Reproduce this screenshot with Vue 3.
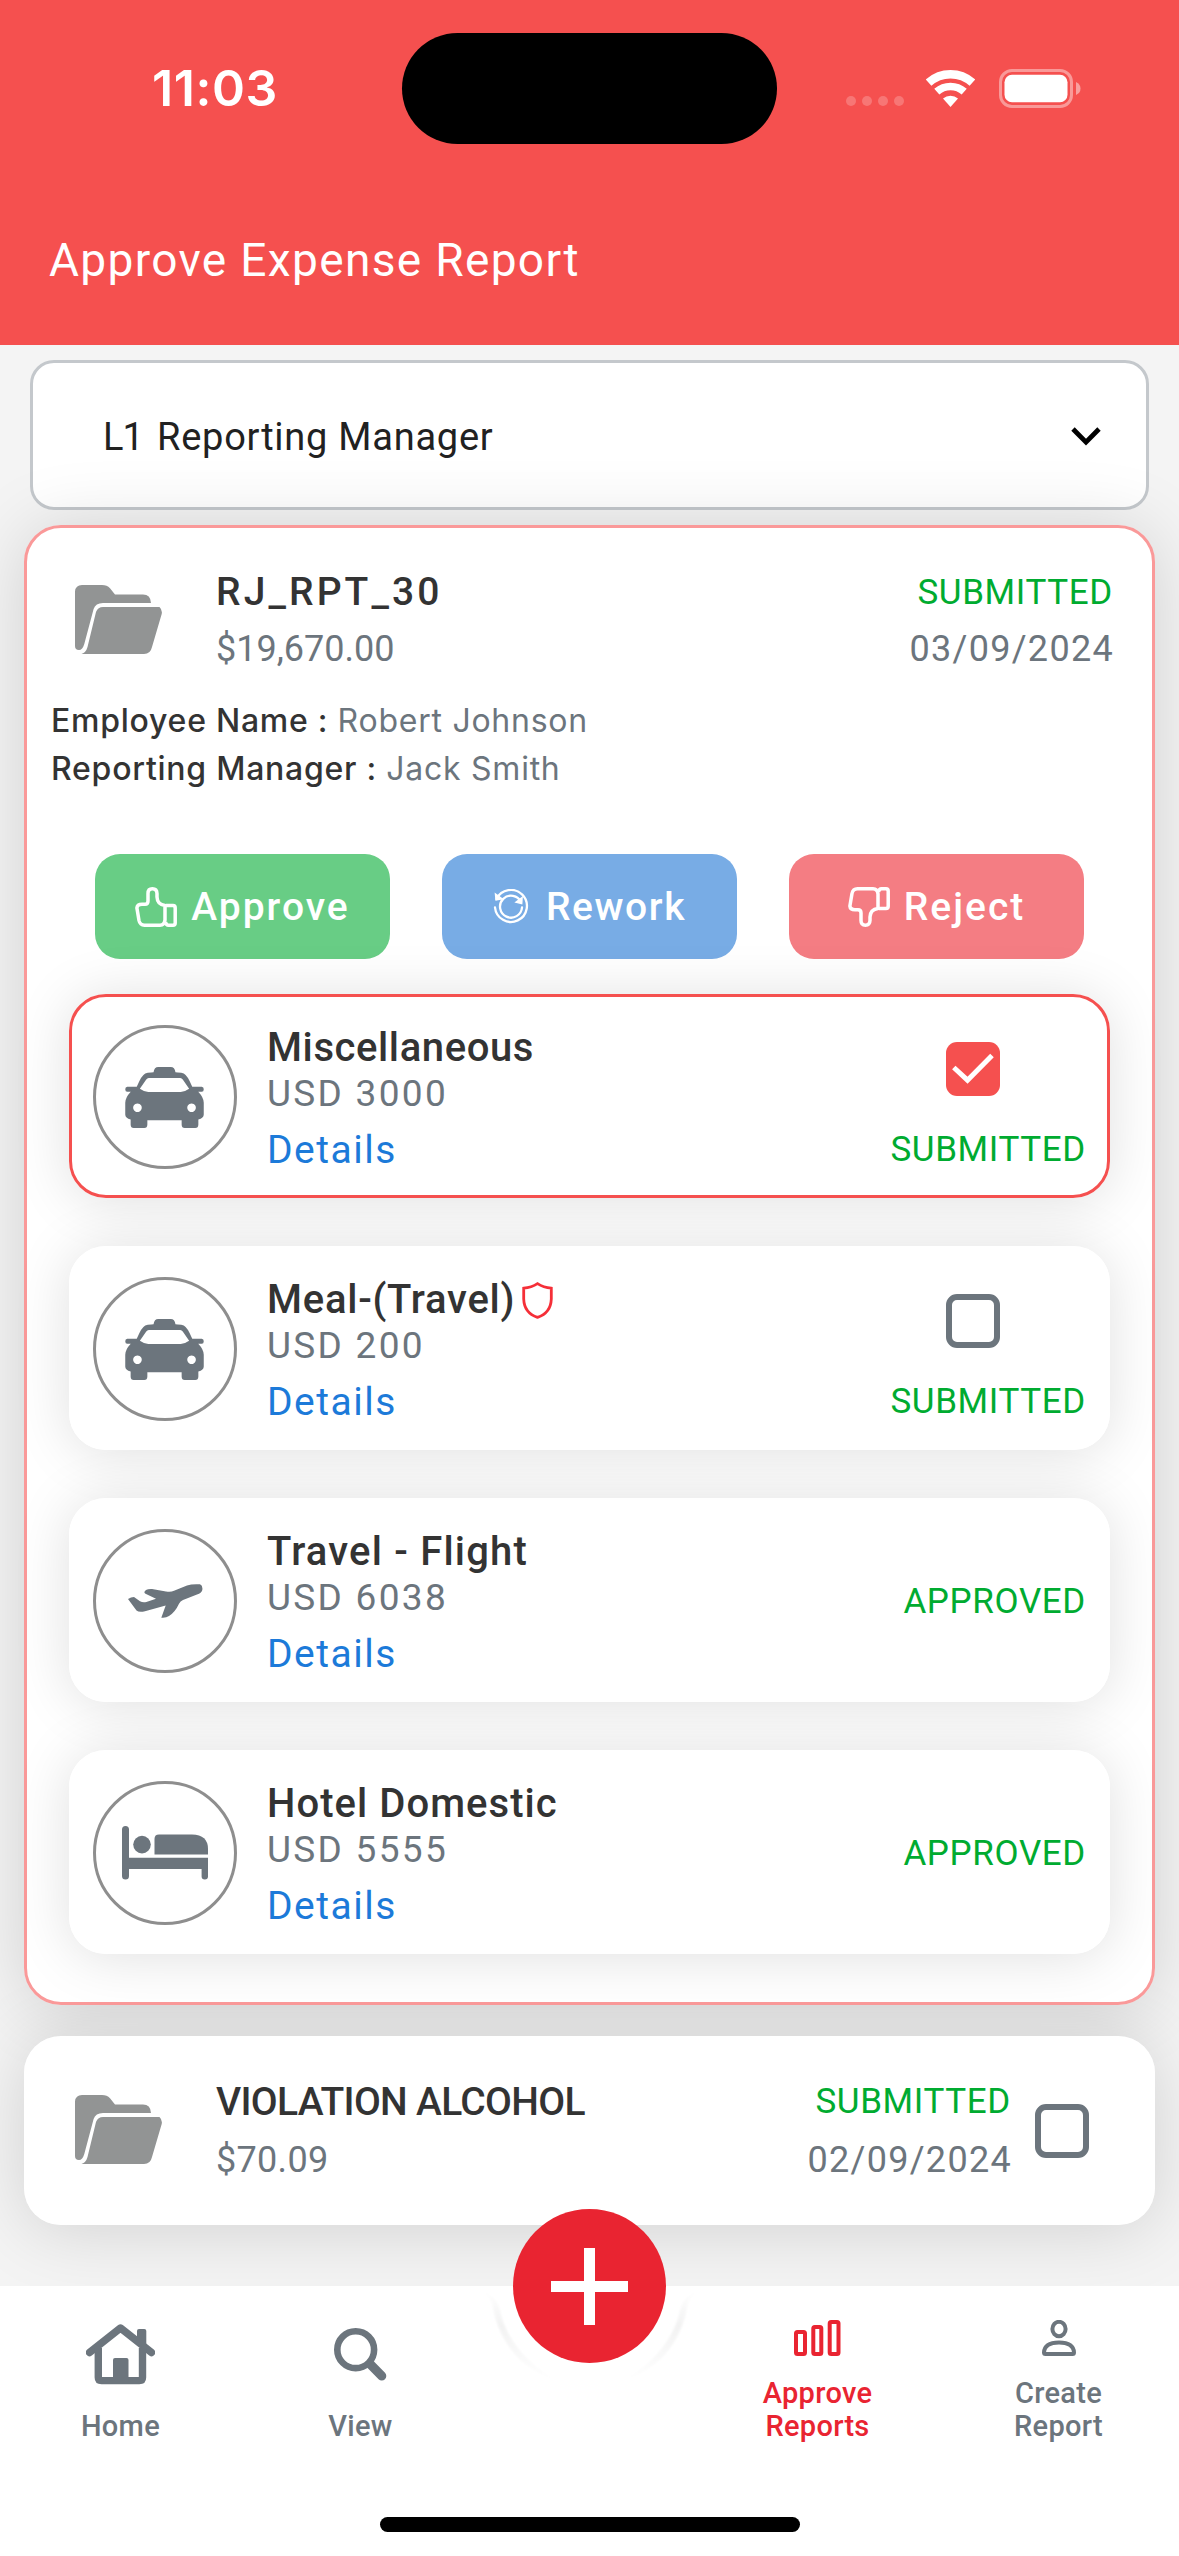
<script setup>
const items = [
  { title: 'Miscellaneous', amount: 'USD 3000', icon: 'taxi', status: 'SUBMITTED', box: true, checked: true, cls: 't-misc' },
  { title: 'Meal-(Travel)', amount: 'USD 200', icon: 'taxi', status: 'SUBMITTED', box: true, shield: true, cls: 't-meal' },
  { title: 'Travel - Flight', amount: 'USD 6038', icon: 'plane', status: 'APPROVED', cls: 't-flight' },
  { title: 'Hotel Domestic', amount: 'USD 5555', icon: 'bed', status: 'APPROVED', cls: 't-hotel' },
]
</script>

<template>
  <div class="screen">
    <header class="header">
      <div class="status-bar">
        <span class="time">11:03</span>
        <div class="island"></div>
        <div class="dots"><i></i><i></i><i></i><i></i></div>
        <svg class="wifi" width="49" height="37" viewBox="0 0 49 37">
          <g fill="none" stroke="#fff">
            <path d="M2.6 12.6 A32.8 32.8 0 0 1 46.4 12.6" stroke-width="8.4" />
            <path d="M10.8 21.7 A20.5 20.5 0 0 1 38.2 21.7" stroke-width="7.6" />
          </g>
          <path d="M24.5 37 L17 28.6 A11.3 11.3 0 0 1 32 28.6 Z" fill="#fff" />
        </svg>
        <svg class="battery" width="82" height="39" viewBox="0 0 82 39">
          <rect x="1.5" y="1.5" width="71" height="36" rx="11.5" fill="none" stroke="#fff" stroke-opacity=".42" stroke-width="3" />
          <rect x="5.5" y="5.8" width="63" height="27.4" rx="7.5" fill="#fff" />
          <path d="M77 13 Q81.5 15 81.5 19.5 Q81.5 24 77 26 Z" fill="#fff" fill-opacity=".45" />
        </svg>
      </div>
      <h1 class="page-title">Approve Expense Report</h1>
    </header>

    <main class="content">
      <div class="select">
        <span class="select-text"><span class="level">L1</span>Reporting Manager</span>
        <svg width="30" height="19" viewBox="0 0 30 19">
          <path d="M2 2 L15 15.2 L28 2" fill="none" stroke="#000" stroke-width="4.8" />
        </svg>
      </div>

      <div class="list">
        <section class="card card-open">
          <div class="card-head">
            <svg class="folder" width="87" height="69" viewBox="0 0 87 69"><use href="#folder-shape" /></svg>
            <div class="head-left">
              <div class="report-name n1">RJ_RPT_30</div>
              <div class="meta a1">$19,670.00</div>
            </div>
            <div class="head-right">
              <div class="status">SUBMITTED</div>
              <div class="meta date">03/09/2024</div>
            </div>
          </div>
          <div class="people">
            <div><b>Employee Name : </b>Robert Johnson</div>
            <div><b>Reporting Manager : </b>Jack Smith</div>
          </div>

          <div class="actions">
            <button class="btn approve">
              <svg width="42" height="40" viewBox="0 0 42 40"><use href="#thumb" /></svg>
              <span>Approve</span>
            </button>
            <button class="btn rework">
              <svg width="36" height="36" viewBox="0 0 36 36" fill="none" stroke="#fff" stroke-width="2.3" stroke-linecap="round">
                <path d="M3.5 10 A16 16 0 1 1 2 18.5" />
                <path d="M28 13 A11 11 0 1 0 29 18.5" />
                <path d="M3 6 L3.4 10.5 L8 9.6 Z M28.6 9.5 L28.3 14 L24 13 Z" fill="#fff" />
              </svg>
              <span>Rework</span>
            </button>
            <button class="btn reject">
              <svg width="42" height="40" viewBox="0 0 42 40"><use href="#thumb" transform="translate(0 40) scale(1 -1)" /></svg>
              <span>Reject</span>
            </button>
          </div>

          <div class="items">
            <article v-for="it in items" :key="it.title" class="item" :class="{ selected: it.checked }">
              <div class="avatar">
                <svg v-if="it.icon === 'taxi'" class="ic-taxi" width="79" height="61" viewBox="0 0 78.5 61">
                  <path fill="#6c757d" fill-rule="evenodd" d="M20 6.5 Q22 5.6 26 5.5 L28.3 5.3 Q29 0 33 0 H45.5 Q49.5 0 50.2 5.3 L52.5 5.5 Q56.5 5.6 58.5 6.5 Q62 8 67 19.7 H76.5 Q78.5 19.7 78.5 22.2 Q78.5 24.7 76.5 24.7 H73 Q78.5 30.5 78.5 35.7 V47.5 Q78.5 51 73.1 52.6 V57.5 Q73.1 61 70 61 H59.5 Q56.4 61 56.4 57.5 V53.3 H22.1 V57.5 Q22.1 61 19 61 H8.5 Q5.4 61 5.4 57.5 V52.6 Q0 51 0 47.5 V35.7 Q0 30.5 5.5 24.7 H2 Q0 24.7 0 22.2 Q0 19.7 2 19.7 H11.5 Q16.5 8 20 6.5 Z M23.5 11 Q22 11 21 12.5 L14.6 21.7 Q19 24.8 23 25 H55.5 Q59.5 24.8 63.9 21.7 L57.5 12.5 Q56.5 11 55 11 Z M12.2 36.4 a4.3 4.3 0 1 0 .01 0 Z M66.3 36.4 a4.3 4.3 0 1 0 .01 0 Z" />
                </svg>
                <svg v-else-if="it.icon === 'plane'" width="75" height="34" viewBox="0 0 75 34">
                  <path fill="#6c757d" d="M0 15 Q3 13 6 13 L12 17.3 Q15 19 18.4 18 L28 14.7 L17.5 9.8 Q15 8.3 18 6 Q20 4.8 24 5 L38 7.4 Q42.5 8.4 46 6.8 L59 1.6 Q64 -.3 72 .3 Q75 1.5 74.3 6 Q73.5 9 69 10.6 L55 16 Q52.3 17 51 19.8 Q47 28.5 41 32 Q38 34.2 33.3 33.7 L37.7 21.5 L17 27.2 Q11 28.5 8.5 26.5 Z" />
                </svg>
                <svg v-else width="86" height="54" viewBox="0 0 86 54" fill="#6c757d">
                  <path d="M0 3.5 Q0 0 3.5 0 Q7 0 7 3.5 V31.7 H86 V50.5 Q86 53.5 82.8 53.5 Q79.6 53.5 79.6 50.5 V43 H7 V50 Q7 53.5 3.5 53.5 Q0 53.5 0 50 Z" />
                  <circle cx="20" cy="18.6" r="8.8" />
                  <path d="M32.5 28.6 V13 Q32.5 8.6 37 8.6 H70 Q86 9 86 23 V28.6 Z" />
                </svg>
              </div>
              <div class="item-text">
                <div class="item-title">
                  <span :class="it.cls">{{ it.title }}</span>
                  <svg v-if="it.shield" width="31" height="37" viewBox="0 0 31 37">
                    <path d="M15.5 1.7 Q9.5 5.6 1.7 6.2 V17 Q2.2 31 15.5 35.3 Q28.8 31 29.3 17 V6.2 Q21.5 5.6 15.5 1.7 Z" fill="none" stroke="#f52f38" stroke-width="2.8" />
                  </svg>
                </div>
                <div class="item-amount">{{ it.amount }}</div>
                <a class="item-link">Details</a>
              </div>
              <div class="item-side">
                <template v-if="it.box">
                  <svg v-if="it.checked" class="check" width="54" height="54" viewBox="0 0 54 54">
                    <rect width="54" height="54" rx="11" fill="#f5504f" />
                    <path d="M7.8 25.5 L21.5 38.2 L46 13.5" fill="none" stroke="#fff" stroke-width="5" />
                  </svg>
                  <div v-else class="check empty"></div>
                </template>
                <div class="status">{{ it.status }}</div>
              </div>
            </article>
          </div>
        </section>

        <section class="card card-closed">
          <svg class="folder" width="87" height="69" viewBox="0 0 87 69"><use href="#folder-shape" /></svg>
          <div class="head-left">
            <div class="report-name n2">VIOLATION ALCOHOL</div>
            <div class="meta a2">$70.09</div>
          </div>
          <div class="head-right">
            <div class="status">SUBMITTED</div>
            <div class="meta date">02/09/2024</div>
          </div>
          <div class="check empty"></div>
        </section>
      </div>
    </main>

    <nav class="nav">
      <div class="tabs">
        <div class="tab">
          <svg class="ic-home" width="69" height="61" viewBox="0 0 69 61" fill="none" stroke="#6c757d">
            <path d="M3.5 28.5 L34.5 4 L65.5 28.5" stroke-width="7.4" stroke-linecap="round" stroke-linejoin="round" />
            <path d="M12.3 24 V53.5 Q12.3 56.6 15.5 56.6 H53.3 Q56.5 56.6 56.5 53.5 V24" stroke-width="7.4" />
            <path d="M51 20 V7 Q51 5 53 5 H58.3 Q60.3 5 60.3 7 V26 Z" fill="#6c757d" stroke="none" />
            <path d="M27 57 V36 Q27 34 29 34 H40.5 Q42.5 34 42.5 36 V57 Z" fill="#6c757d" stroke="none" />
          </svg>
          <span class="tab-label">Home</span>
        </div>
        <div class="tab tab-view">
          <svg class="ic-search" width="53" height="53" viewBox="0 0 53 53" fill="none" stroke="#6c757d">
            <circle cx="21.7" cy="21.7" r="18.4" stroke-width="6.6" />
            <path d="M37 37 L47.8 48" stroke-width="9" stroke-linecap="round" />
          </svg>
          <span class="tab-label">View</span>
        </div>
        <div class="tab-gap"></div>
        <div class="tab active">
          <svg class="ic-small" width="47" height="36" viewBox="0 0 47 36" fill="none" stroke="#e92431" stroke-width="4">
            <rect x="2" y="12" width="9" height="22" rx="1.5" />
            <rect x="19.3" y="7" width="8" height="27" rx="1.5" />
            <rect x="35.7" y="2" width="8.8" height="32" rx="1.5" />
          </svg>
          <span class="tab-label">Approve<br />Reports</span>
        </div>
        <div class="tab">
          <svg class="ic-small" width="34" height="36" viewBox="0 0 34 36" fill="none" stroke="#6c757d" stroke-width="4">
            <ellipse cx="17" cy="9" rx="6.6" ry="7.2" />
            <path d="M2 32.5 Q2.5 22.5 17 22.5 Q31.5 22.5 32 32.5 Q32 34 30.5 34 H3.5 Q2 34 2 32.5 Z" />
          </svg>
          <span class="tab-label">Create<br />Report</span>
        </div>
      </div>
      <div class="home-indicator"></div>
      <svg class="notch" width="240" height="120" viewBox="-120 0 240 120">
        <defs>
          <linearGradient id="fade" x1="0" y1="0" x2="0" y2="1">
            <stop offset="0" stop-color="#000" stop-opacity="0" />
            <stop offset=".4" stop-color="#000" stop-opacity=".05" />
            <stop offset="1" stop-color="#000" stop-opacity="0" />
          </linearGradient>
          <filter id="soft"><feGaussianBlur stdDeviation="1.2" /></filter>
        </defs>
        <g fill="url(#fade)" filter="url(#soft)">
          <path fill="url(#fade)" d="M-112 4 Q-99 8 -97 22 C-90 58 -68 84 -34 94 C-62 78 -84 54 -90 24 Q-94 8 -112 4 Z" />
          <path fill="url(#fade)" d="M112 4 Q99 8 97 22 C90 58 68 84 34 94 C62 78 84 54 90 24 Q94 8 112 4 Z" />
        </g>
      </svg>
      <div class="fab">
        <svg width="77" height="77" viewBox="0 0 77 77"><path d="M38.5 0 V77 M0 38.5 H77" stroke="#fff" stroke-width="11" /></svg>
      </div>
    </nav>

    <svg class="symbols" width="0" height="0">
      <defs>
        <g id="folder-shape" fill="#929494">
          <path d="M0 6.5 Q.5 0 7 0 H27 Q32 0 35 3.2 L40 9.6 H68 Q75.5 9.6 76 18 H28 Q20.5 18 18.6 24 L9.3 59 Q7.5 65 4 65 Q0 65 0 61 Z" />
          <path d="M84.5 22 Q87.6 25 86.7 29 L77 62 Q75.5 69 69 69 H6.5 Q11 67.5 12.5 62 L21 27 Q23 22 28 22 Z" />
        </g>
        <g id="thumb" fill="none" stroke="#fff" stroke-width="3.5" stroke-linejoin="round">
          <path d="M1.9 21 Q2.2 17.3 7 17.3 H10 Q13 17.3 13 14 V6.5 Q13 1.8 17.4 1.8 Q21.8 1.8 22 6.5 V10 Q22.3 17.5 30 18.5 V33 Q29.5 38.2 25 38.2 H9.5 Q5 38.2 4 33.5 Z" />
          <path d="M31 18.5 H38 Q40.2 18.5 40.2 20.7 V36 Q40.2 38.2 38 38.2 H33.5 Q31 38.2 30.5 35" />
        </g>
      </defs>
    </svg>
  </div>
</template>

<style>
body { margin: 0; background: #f4f4f4; }
</style>

<style scoped>
.screen { width: 1179px; height: 2556px; display: flex; flex-direction: column; overflow: hidden; background: #f4f4f4; font-family: Roboto, "Liberation Sans", sans-serif; box-sizing: border-box; }
.screen * { box-sizing: border-box; }
.screen svg { display: block; flex: none; }
.symbols { position: absolute; }

.header { height: 345px; flex: none; background: #f5504f; color: #fff; }
.status-bar { height: 176px; display: flex; align-items: center; }
.time { width: 402px; padding-left: 152px; font: 600 50px/60px Inter, sans-serif; letter-spacing: .6px; white-space: nowrap; }
.island { width: 375px; height: 111px; margin-top: 1px; border-radius: 56px; background: #000; }
.dots { display: flex; gap: 6px; margin: 26px 0 0 69px; }
.dots i { width: 10px; height: 10px; border-radius: 50%; background: rgba(255,255,255,.22); }
.wifi { margin-left: 22px; }
.battery { margin-left: 24px; }
.page-title { margin: 54px 0 0 49px; font-size: 46px; line-height: 60px; font-weight: 400; letter-spacing: 1.35px; }

.content { flex: 1; min-height: 0; padding: 15px 24px 0; }
.select { height: 150px; margin: 0 6px; padding: 3px 45px 0 70px; display: flex; align-items: center; justify-content: space-between; border: 3px solid #c4c8cc; border-radius: 24px; background: #fff; color: #212121; font-size: 38px; }
.level { display: inline-block; width: 54px; letter-spacing: -1px; }
.select-text { letter-spacing: .75px; }

.list { margin-top: 15px; position: relative; isolation: isolate; }
.card { position: relative; border-radius: 37px; background: #fff; }
.card::before { content: ""; position: absolute; inset: 0; z-index: -1; border-radius: 37px; box-shadow: 0 4px 72px rgba(0,0,0,.145); }
.card-open { border: 3px solid #fa9999; padding: 36px 0 48px; }
.card-open::before { inset: -3px; }
.card-head { display: flex; align-items: center; padding-right: 39px; height: 114px; }
.folder { margin: -3px 0 0 48px; }
.head-left { margin-left: 54px; line-height: 57px; }
.head-right { margin-left: auto; text-align: right; line-height: 57px; }
.report-name { font-size: 39px; font-weight: 500; color: #333; white-space: nowrap; }
.n1 { letter-spacing: 3.1px; }
.n2 { letter-spacing: -.7px; }
.meta { font-size: 36px; color: #6c757d; }
.a2 { letter-spacing: .3px; }
.date { letter-spacing: 1.3px; margin-right: -1px; }
.status { font-size: 35px; color: #00ab30; letter-spacing: .65px; }
.people { margin: 19px 0 0 24px; font: 400 32px/48px Inter, sans-serif; letter-spacing: .75px; color: #6c757d; }
.people b { font-weight: 500; color: #333; }

.actions { display: flex; gap: 52px; margin: 61px 0 0 68px; }
.btn { width: 295px; height: 105px; padding: 0; display: flex; align-items: center; justify-content: center; gap: 14px; border: 0; border-radius: 25px; color: #fff; font: 500 39px/60px Roboto, sans-serif; }
.btn span { letter-spacing: 2px; }
.approve { background: #68cd85; }
.rework { background: #78ace5; gap: 17px; }
.rework span { letter-spacing: 1.6px; }
.reject { background: #f47d83; }

.items { position: relative; isolation: isolate; display: flex; flex-direction: column; gap: 48px; margin: 35px 42px 0; }
.item { position: relative; height: 204px; display: flex; align-items: center; border: 3px solid #fff; border-radius: 37px; background: #fff; padding: 0 21px; }
.item::before { content: ""; position: absolute; inset: -3px; z-index: -1; border-radius: 37px; box-shadow: 0 3px 56px rgba(0,0,0,.125); }
.item.selected { border-color: #f5504f; }
.avatar { width: 144px; height: 144px; margin-top: 2px; flex: none; display: flex; align-items: center; justify-content: center; border: 3px solid #8e8e8e; border-radius: 50%; }
.ic-taxi { margin-right: 2px; }
.item-text { align-self: flex-start; margin: 28px 0 0 30px; }
.item-title { display: flex; align-items: center; gap: 7px; height: 46px; font-size: 40px; line-height: 46px; font-weight: 500; color: #333; white-space: nowrap; }
.t-misc { letter-spacing: .6px; }
.t-meal { letter-spacing: .75px; }
.t-flight { letter-spacing: 1.2px; }
.t-hotel { letter-spacing: 1.05px; }
.item-amount { font-size: 37px; line-height: 46px; color: #6c757d; letter-spacing: 2.3px; }
.item-link { display: block; font-size: 39px; line-height: 66px; color: #1c7ad9; letter-spacing: 1.5px; }
.item-side { margin: 3px 0 0 auto; display: flex; flex-direction: column; align-items: center; }
.item-side .status { line-height: 60px; }
.check { width: 54px; height: 54px; }
.item-side .check { margin: 26px 31px 24px 0; }
.empty { border: 6px solid #6c757d; border-radius: 11px; }

.card-closed { height: 189px; margin-top: 31px; display: flex; align-items: center; padding: 0 66px 0 3px; }
.card-closed .head-left, .card-closed .head-right { line-height: 58px; }
.card-closed .check { margin-left: 24px; }

.nav { position: relative; height: 270px; flex: none; background: #fff; z-index: 2; }
.tabs { display: flex; height: 157px; }
.tab { width: 241px; display: flex; flex-direction: column; align-items: center; justify-content: flex-end; color: #6c757d; }
.tab-view { width: 239px; }
.tab-gap { width: 217px; }
.tab-label { font-size: 29px; line-height: 33px; font-weight: 500; letter-spacing: .3px; text-align: center; }
.active { color: #e92431; }
.ic-home { margin-bottom: 25px; }
.ic-search { margin-bottom: 29px; }
.ic-small { margin-bottom: 21px; }
.home-indicator { width: 420px; height: 15px; margin: 74px auto 0; border-radius: 8px; background: #000; }
.notch { position: absolute; left: 469.5px; top: 0; }
.fab { position: absolute; left: 513px; top: -77px; width: 153px; height: 154px; border-radius: 50%; background: #e92431; display: flex; align-items: center; justify-content: center; }
</style>
